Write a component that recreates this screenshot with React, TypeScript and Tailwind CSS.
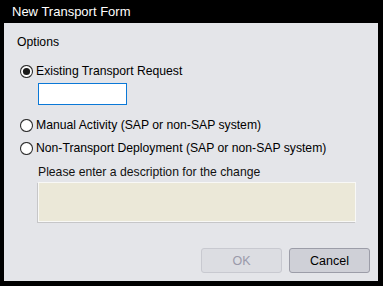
import { useState } from "react";

const Radio = ({ checked }: { checked: boolean }) => (
  <svg width="13" height="13" viewBox="0 0 13 13" className="shrink-0">
    <circle cx="6.5" cy="6.5" r="6" fill="#ffffff" stroke="#333333" strokeWidth="1.1" />
    {checked && <circle cx="6.5" cy="6.5" r="3.6" fill="#1a1a1a" />}
  </svg>
);

const options = [
  "Existing Transport Request",
  "Manual Activity (SAP or non-SAP system)",
  "Non-Transport Deployment (SAP or non-SAP system)",
];

const App = () => {
  const [selected, setSelected] = useState(0);

  return (
    <div
      className="w-[383px] h-[286px] bg-black flex flex-col pl-[4px] pr-[5px] pb-[5px]"
      style={{ fontFamily: '"Liberation Sans", Arial, sans-serif' }}
    >
      <div className="h-[23px] flex items-center pl-[8px] text-white text-[13px] leading-[15px]">
        New Transport Form
      </div>
      <div className="flex-grow bg-[#e4e5e9] flex flex-col pl-[13px] pt-[12px] text-[12.2px] leading-[14px] text-black">
        <div>Options</div>

        <button
          onClick={() => setSelected(0)}
          className="mt-[15px] ml-[3px] h-[14px] flex items-center gap-[3px] text-left"
        >
          <Radio checked={selected === 0} />
          <span>{options[0]}</span>
        </button>
        <input className="mt-[5px] ml-[21px] w-[89px] h-[22px] bg-white border border-[#0a78d7] outline-none" />

        <button
          onClick={() => setSelected(1)}
          className="mt-[13px] ml-[3px] h-[14px] flex items-center gap-[3px] text-left"
        >
          <Radio checked={selected === 1} />
          <span>{options[1]}</span>
        </button>
        <button
          onClick={() => setSelected(2)}
          className="mt-[9px] ml-[3px] h-[14px] flex items-center gap-[3px] text-left"
        >
          <Radio checked={selected === 2} />
          <span>{options[2]}</span>
        </button>

        <div className="mt-[10px] ml-[21px] text-[#111111]">Please enter a description for the change</div>
        <textarea className="mt-[3px] ml-[21px] w-[318px] h-[40px] resize-none bg-[#ebe8d8] border border-[#f8f8f6] shadow-[-1px_1px_0_#c6c6c8] outline-none" />

        <div className="mt-auto mb-[8px] mr-[8px] flex justify-end gap-[7px]">
          <button
            disabled
            className="w-[81px] h-[25px] rounded-[3px] bg-[#dcdde2] border border-[#c8c9d0] text-[#9a9aaa] text-[12.5px]"
          >
            OK
          </button>
          <button className="w-[81px] h-[25px] rounded-[3px] bg-[#cfd0d7] border border-[#9c9da8] text-black text-[12.5px]">
            Cancel
          </button>
        </div>
      </div>
    </div>
  );
};

export default App;
